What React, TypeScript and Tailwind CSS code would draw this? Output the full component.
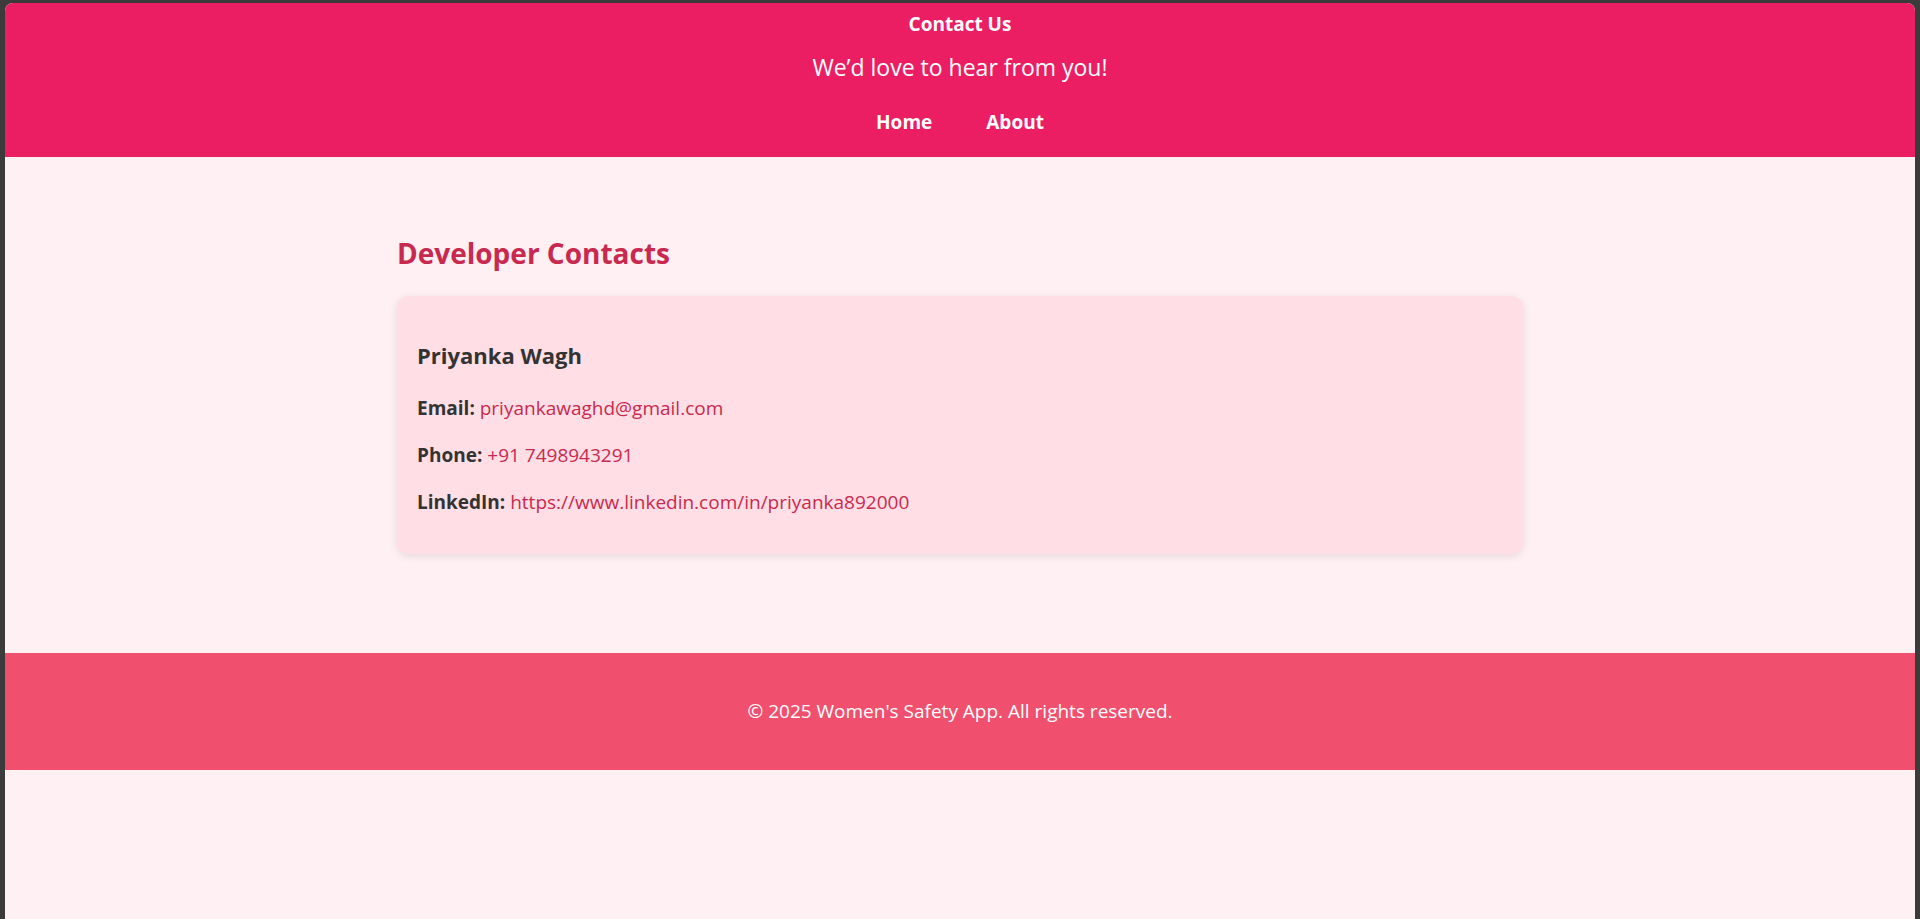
import React from 'react';

const font = { fontFamily: '"Segoe UI", "Open Sans", "Noto Sans", sans-serif' };

const contact = {
  name: 'Priyanka Wagh',
  email: 'priyankawaghd@gmail.com',
  phone: '+91 7498943291',
  linkedin: 'https://www.linkedin.com/in/priyanka892000',
};

function Row({ label, value }: { label: string; value: string }) {
  return (
    <p className="text-[19px] leading-[27px] text-[#333]">
      <strong className="font-bold">{label}:</strong>{' '}
      <a className="text-[#c9294e]">{value}</a>
    </p>
  );
}

export default function App() {
  return (
    <div className="min-h-screen bg-[#3b3b3b] pt-[3px] px-[5px] flex flex-col" style={font}>
      <div className="flex-1 flex flex-col bg-[#fff0f3] rounded-t-lg overflow-hidden">
        {/* header */}
        <header className="bg-[#eb1e63] text-white text-center pt-[9px] pb-[23px]">
          <h1 className="text-[19px] leading-[24px] font-bold">Contact Us</h1>
          <p className="mt-[16px] text-[23px] leading-[30px]">We’d love to hear from you!</p>
          <nav className="mt-[28px] flex justify-center gap-[54px] text-[19px] leading-[24px] font-bold">
            <a>Home</a>
            <a>About</a>
          </nav>
        </header>

        {/* content */}
        <main className="pt-[78px] pb-[99px]">
          <div className="w-[1126px] mx-auto">
            <h2 className="text-[28px] leading-[36px] font-bold text-[#c9294e]">Developer Contacts</h2>
            <div className="mt-[25px] bg-[#ffdfe5] rounded-xl shadow-[0_2px_8px_rgba(0,0,0,0.1)] pl-5 pr-5 pt-[45px] pb-[38px]">
              <h3 className="text-[22px] leading-[28px] font-bold text-[#333]">{contact.name}</h3>
              <div className="mt-[26px] flex flex-col gap-[20px]">
                <Row label="Email" value={contact.email} />
                <Row label="Phone" value={contact.phone} />
                <Row label="LinkedIn" value={contact.linkedin} />
              </div>
            </div>
          </div>
        </main>

        {/* footer */}
        <footer className="bg-[#f0506e] text-white text-center py-[45px]">
          <p className="text-[19px] leading-[27px]">© 2025 Women's Safety App. All rights reserved.</p>
        </footer>
        <div className="flex-1" />
      </div>
    </div>
  );
}
